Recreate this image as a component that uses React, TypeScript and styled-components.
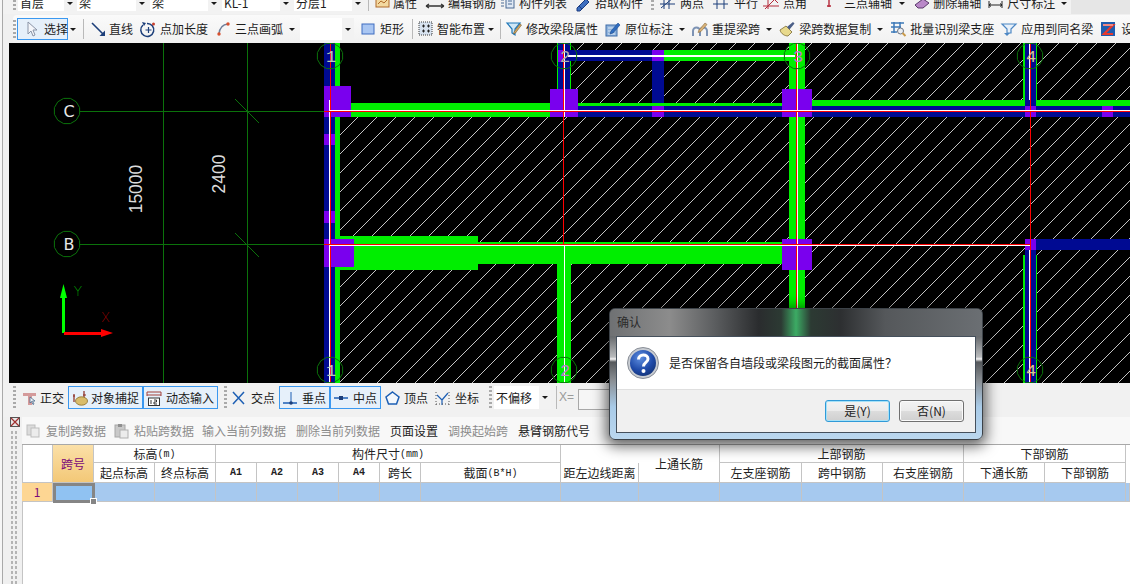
import React from "react";
import styled, { createGlobalStyle } from "styled-components";

const Global = createGlobalStyle`
  html, body { margin: 0; padding: 0; overflow: hidden; background: #f0f0f0; }
  * { box-sizing: border-box; }
`;

const FONT = `"Noto Sans CJK SC", "Liberation Sans", sans-serif`;

const Page = styled.div`
  position: relative;
  width: 1130px;
  height: 584px;
  overflow: hidden;
  padding-left: 3px;
  background: linear-gradient(90deg, #f6f6f6 2px, #a9a9a9 2px, #a9a9a9 3px, #f0f0f0 3px);
  font: 12px/16px ${FONT};
  color: #1c1c1c;
  display: flex;
  flex-direction: column;
`;

const TopRow = styled.div`
  height: 14px;
  flex: none;
  display: flex;
  align-items: flex-end;
  padding: 0 0 3px 13px;
  overflow: hidden;
  background: linear-gradient(90deg, #f2f2f2, #f2f2f2 1068px, #e6e6e6 1068px);
`;

const MainRow = styled.div`
  height: 29px;
  flex: none;
  display: flex;
  align-items: center;
  padding-left: 10px;
  padding-top: 1px;
  background: #f0f0f0;
  overflow: hidden;
  white-space: nowrap;
`;

const Band = styled.div`
  display: flex;
  align-items: center;
  height: 100%;
  flex: 1;
  border-radius: 4px 0 0 0;
  background: linear-gradient(#fafafa, #f1f1f1);
`;

const Grip = styled.span<{ $ml?: number; $h?: number }>`
  flex: none;
  width: 3px;
  height: ${(p) => p.$h ?? 18}px;
  margin-left: ${(p) => p.$ml ?? 0}px;
  background-image: linear-gradient(#a9a9a9 50%, transparent 50%);
  background-size: 3px 4px;
`;

const Sep = styled.span<{ $ml: number }>`
  flex: none;
  width: 1px;
  height: 20px;
  margin-left: ${(p) => p.$ml}px;
  background: #b9b9b9;
`;

const Item = styled.span<{ $ml: number; $gap: number; $dim?: boolean }>`
  flex: none;
  display: inline-flex;
  align-items: center;
  gap: ${(p) => p.$gap}px;
  margin-left: ${(p) => p.$ml}px;
  color: ${(p) => (p.$dim ? "#8c8c8c" : "#1c1c1c")};
`;

const ActiveBtn = styled.span<{ $ml: number; $w: number; $pad: number; $gap: number; $h?: number }>`
  flex: none;
  display: inline-flex;
  align-items: center;
  gap: ${(p) => p.$gap}px;
  width: ${(p) => p.$w}px;
  height: ${(p) => p.$h ?? 23}px;
  margin-left: ${(p) => p.$ml}px;
  padding-left: ${(p) => p.$pad - 1}px;
  border: 1px solid #3a98f0;
  background: #e6f0fa;
`;

const Caret = styled.span<{ $ml: number }>`
  flex: none;
  width: 10px;
  height: 16px;
  margin-left: ${(p) => p.$ml}px;
  display: inline-flex;
  align-items: center;
  justify-content: center;
  &::after {
    content: "";
    border-left: 3px solid transparent;
    border-right: 3px solid transparent;
    border-top: 3px solid #1a1a1a;
  }
`;

const Combo = styled.span<{ $ml: number; $w: number; $h?: number }>`
  flex: none;
  position: relative;
  width: ${(p) => p.$w}px;
  height: ${(p) => p.$h ?? 22}px;
  margin-left: ${(p) => p.$ml}px;
  padding-left: 2px;
  background: #fff;
  line-height: ${(p) => p.$h ?? 22}px;
`;

const ComboArrow = styled.span`
  position: absolute;
  right: 0;
  top: 0;
  bottom: 0;
  width: 12px;
  background: #f2f2f2;
  display: flex;
  align-items: center;
  justify-content: center;
  &::after {
    content: "";
    border-left: 3px solid transparent;
    border-right: 3px solid transparent;
    border-top: 3px solid #1a1a1a;
  }
`;

const CanvasRow = styled.div`
  height: 340px;
  flex: none;
  display: flex;
`;

const Rail = styled.div`
  width: 6px;
  flex: none;
  background: #f0f0f0;
`;

const Canvas = styled.svg`
  display: block;
  flex: none;
  background: #000;
`;

const SnapRow = styled.div`
  height: 34px;
  flex: none;
  display: flex;
  align-items: flex-start;
  padding: 3px 0 0 10px;
  background: #f1f1f1;
  white-space: nowrap;
  > * { height: 23px; }
`;

const XLabel = styled.span`
  flex: none;
  width: 19px;
  margin-left: 2px;
  line-height: 23px;
  color: #9a9a9a;
  font-family: "Liberation Sans", sans-serif;
`;

const XInput = styled.span`
  flex: none;
  width: 60px;
  margin-top: 3px;
  height: 21px !important;
  border: 1px solid #a8a8a8;
  background: #f6f6f6;
`;

const Lower = styled.div`
  flex: 1;
  display: flex;
  min-height: 0;
`;

const LowerRail = styled.div`
  width: 19px;
  flex: none;
  background: #f0f0f0;
  padding: 0 0 0 7px;
  display: flex;
  flex-direction: column;
`;

const RailDots = styled.div`
  margin-top: 3px;
  flex: 1;
  width: 8px;
  background-image: radial-gradient(#b4b4b4 1px, transparent 1.2px);
  background-size: 4px 5px;
`;

const LowerMain = styled.div`
  flex: 1;
  min-width: 0;
  display: flex;
  flex-direction: column;
  background: #fff;
`;

const CmdRow = styled.div`
  height: 27px;
  flex: none;
  display: flex;
  align-items: center;
  background: #f8f8f8;
  white-space: nowrap;
`;

const TableArea = styled.div`
  flex: 1;
  box-shadow: inset 1px 0 #c4c4c4;
`;

const Table = styled.div`
  display: grid;
  grid-template-columns: 31px 41px 61px 61px 41px 41px 41px 41px 41px 140px 78px 81px 82px 81px 81px 81px 81px 4px;
  grid-template-rows: 18px 20px 19px;
  border-top: 1px solid #a8a8a8;
  position: relative;
`;

const Cell = styled.div<{ $col: string; $row: string; $tone?: "head" | "corner" | "rowhead" | "data" }>`
  grid-column: ${(p) => p.$col};
  grid-row: ${(p) => p.$row};
  display: flex;
  align-items: center;
  justify-content: center;
  overflow: hidden;
  white-space: nowrap;
  border-right: 1px solid #c4c4c4;
  border-bottom: 1px solid #c4c4c4;
  line-height: 16px;
  color: ${(p) => (p.$tone === "corner" || p.$tone === "rowhead" ? "#7a0a7a" : "#222")};
  background: ${(p) =>
    p.$tone === "corner"
      ? "linear-gradient(#fbe0a8, #f3c877)"
      : p.$tone === "rowhead"
      ? "#fdd693"
      : p.$tone === "data"
      ? "#a6c9ef"
      : "transparent"};
`;

const Small = styled.span`
  font: 10px/16px "Liberation Mono", monospace;
  padding-top: 2px;
`;

const Mono = styled.span`
  font: bold 10px/16px "Liberation Mono", monospace;
`;

const CurrentCell = styled.div`
  position: absolute;
  left: 31px;
  top: 38px;
  width: 42px;
  height: 20px;
  border: 3px solid #858585;
  background: #90c2f2;
  &::after {
    content: "";
    position: absolute;
    right: -5px;
    bottom: -5px;
    width: 5px;
    height: 5px;
    background: #858585;
    border: 1px solid #fff;
  }
`;

const Dialog = styled.div`
  position: absolute;
  left: 609px;
  top: 308px;
  width: 374px;
  height: 132px;
  padding: 0 6px 6px;
  border-radius: 6px;
  border: 1px solid #3c4248;
  box-shadow: 0 3px 14px 3px rgba(0, 0, 0, 0.62);
  background: linear-gradient(
    #5d6063 0,
    #6a6d70 28px,
    #b9bbbd 48px,
    #f4f4f4 50px,
    #55585b 53px,
    #8b9095 72px,
    #a9cbe8 98px,
    #bcd8ef 132px
  );
  display: flex;
  flex-direction: column;
`;

const DialogTitle = styled.div`
  height: 27px;
  flex: none;
  margin: 0 -6px;
  padding-left: 7px;
  line-height: 26px;
  color: #2b2b2b;
  border-radius: 5px 5px 0 0;
  background: linear-gradient(
    90deg,
    #6f7173 0,
    #8c8c8c 16%,
    #5c5e60 28%,
    #2a2c2e 40%,
    #2c3a33 46%,
    #3cab64 50%,
    #2c3a33 54%,
    #2d2f31 62%,
    #55585b 74%,
    #6b6f73 100%
  );
`;

const DialogBody = styled.div`
  flex: 1;
  display: flex;
  flex-direction: column;
  border: 1px solid #45505c;
  background: #f0f0f0;
`;

const Message = styled.div`
  height: 53px;
  flex: none;
  display: flex;
  align-items: center;
  gap: 10px;
  padding: 0 0 1px 10px;
  background: #fff;
  border-bottom: 1px solid #dfdfdf;
  white-space: nowrap;
`;

const DialogButtons = styled.div`
  flex: 1;
  display: flex;
  justify-content: flex-end;
  gap: 9px;
  padding: 10px 11px 0 0;
`;

const DlgButton = styled.div<{ $focus?: boolean }>`
  width: 65px;
  height: 22px;
  display: flex;
  align-items: center;
  justify-content: center;
  border-radius: 3px;
  border: 1px solid ${(p) => (p.$focus ? "#2f9ad8" : "#707070")};
  box-shadow: inset 0 0 0 1px ${(p) => (p.$focus ? "#a6e1f7" : "#fbfbfb")};
  background: linear-gradient(#f3f3f3, #ebebeb 48%, #dcdcdc 52%, #cfcfcf);
`;

/* ---------- icons ---------- */

const Svg = styled.svg`
  flex: none;
  display: block;
  overflow: visible;
`;

const icons: Record<string, React.ReactNode> = {
  cursor: <path d="M3 1v12l3-3 2 5 2-1-2-5h4z" fill="#f4f6fa" stroke="#8a94a6" />,
  line: (
    <>
      <path d="M1 2l12 12" stroke="#1d3f7a" strokeWidth="1.6" fill="none" />
      <path d="M14 15H8.5L14 9.5z" fill="#1d3f7a" />
    </>
  ),
  addlen: (
    <>
      <path d="M3 4a6.5 6.5 0 1 0 4-1.6" stroke="#1d3f7a" strokeWidth="1.5" fill="none" />
      <path d="M8.5 6v6M5.5 9h6" stroke="#1d3f7a" strokeWidth="1.2" />
      <path d="M2 1l4 1-2 3z" fill="#1d3f7a" />
      <circle cx="13.5" cy="3" r="1.5" fill="#c8402e" />
    </>
  ),
  arc: (
    <>
      <path d="M3 13C3.5 7 7 3.5 12 3" stroke="#6f7f9a" strokeWidth="1.4" fill="none" />
      <circle cx="3" cy="13" r="1.7" fill="#d8502e" />
      <circle cx="12" cy="3" r="1.7" fill="#d8502e" />
    </>
  ),
  rect: <rect x="1" y="3" width="12" height="10" fill="#a9c6f2" stroke="#3f6cc0" />,
  smart: (
    <>
      <rect x="1" y="1" width="13" height="13" fill="#d7e2ef" stroke="#3a3a3a" strokeDasharray="1 1" />
      <path d="M4 5h3M5.5 3.5v3M9 5h3M10.5 3.5v3M4 10h3M5.5 8.5v3M9 10h3M10.5 8.5v3" stroke="#222" />
    </>
  ),
  funnel: (
    <>
      <path d="M1 2h13l-5 6v6l-3-2V8z" fill="#cfe7f6" stroke="#2178b8" strokeWidth="1.2" />
      <path d="M8 11l6-8 1.5 1-6 8-2 1z" fill="#d9a75a" stroke="#6a5a3a" strokeWidth=".6" />
    </>
  ),
  doc: (
    <>
      <rect x="1" y="4" width="11" height="11" fill="#8fb3dc" stroke="#3f6ca8" />
      <path d="M3 7h7M3 10h7M3 13h7" stroke="#dce8f6" />
      <path d="M6 10l7-8 2 2-7 8-3 1z" fill="#2f6dc0" stroke="#1b4a8c" strokeWidth=".6" />
    </>
  ),
  arches: (
    <>
      <path d="M1 15v-5a3 3 0 0 1 7 0v5M8 15v-5a3 3 0 0 1 7 0v5" stroke="#7d93b4" strokeWidth="2" fill="none" />
      <path d="M7 9l6-7 2 1.5-6 7-3 1z" fill="#d9b37a" stroke="#8a6a3a" strokeWidth=".6" />
    </>
  ),
  brush: (
    <>
      <path d="M1 9l6-4 6 6-4 4C6 15 2 13 1 9z" fill="#e8d98c" stroke="#7a6a32" strokeWidth=".8" />
      <path d="M8 6l6-5 1.5 1.5-5 6z" fill="#4b5f88" />
    </>
  ),
  batch: (
    <>
      <path d="M1 2h13M1 6h10M4 1v11M10 1v6M1 11h6" stroke="#3d79b8" strokeWidth="1.5" />
      <circle cx="10.5" cy="10" r="3" fill="#e9eef3" stroke="#6b7280" />
      <path d="M12.5 12l3 3" stroke="#c99a4a" strokeWidth="2" />
    </>
  ),
  apply: (
    <>
      <path d="M1 3h14l-5 5v4H6V8z" fill="#e8f1fa" stroke="#4d87c4" strokeWidth="1.2" />
      <path d="M3 12l3 3 3-3z" fill="#4d87c4" />
    </>
  ),
  zbox: (
    <>
      <rect x="1" y="1" width="14" height="14" fill="#1e5cae" />
      <path d="M3 4h10L4 13h9" stroke="#e6392e" strokeWidth="2.2" fill="none" />
      <path d="M3 4h10" stroke="#fff" strokeWidth=".8" />
    </>
  ),
  prop: (
    <>
      <rect x="1" y="2" width="13" height="10" fill="#f3d9a0" stroke="#b06a2a" />
      <path d="M3 9l3-3 3 2 3-3" stroke="#b06a2a" fill="none" />
    </>
  ),
  steel: <path d="M1 11h18M1 11l3-2M1 11l3 2M19 11l-3-2M19 11l-3 2M8 11h4" stroke="#333" strokeWidth="1.3" fill="none" />,
  list: (
    <>
      <rect x="6" y="2" width="8" height="11" fill="#dfe8f4" stroke="#4a6a94" />
      <path d="M1 5h3M1 8h3M1 11h3M8 6h4M8 9h4" stroke="#4a6a94" />
    </>
  ),
  pick: <path d="M1 13l9-9 3 3-9 9H1zM3 11l3 3" fill="#3d6fc0" stroke="#1c3c80" />,
  axis2: <path d="M0 9h15M4 3v11M9 3v11M1 13L13 3" stroke="#1d3f7a" fill="none" />,
  axis3: <path d="M0 9h15M4 3v11M11 3v11" stroke="#1d3f7a" fill="none" />,
  axis4: <path d="M0 11h16M5 3v11M14 2L2 14M11 4l4 4" stroke="#b52a3a" fill="none" />,
  axis5: <path d="M3 4v8M1 11h4" stroke="#b52a3a" strokeWidth="1.4" fill="none" />,
  eraser: <path d="M2 10l8-6 6 4-6 5H5z" fill="#b988c8" stroke="#5a3a6a" />,
  dim: <path d="M1 6v7M14 6v7M1 10h13M3 8.5L1 10l2 1.5M12 8.5l2 1.5-2 1.5" stroke="#222" fill="none" />,
  ortho: (
    <>
      <path d="M1 3h13v3H10v9H6V6H1z" fill="#d49a9a" />
      <path d="M8 7v6l1.5-1.5 1.5 3 1-.5-1.5-3H13z" fill="#eef2f6" stroke="#4e6d8e" strokeWidth=".8" />
    </>
  ),
  snap: (
    <>
      <path d="M2 4v8M12 1v7" stroke="#8a2a20" strokeWidth="1.2" />
      <path d="M1 6h2M11 5h3" stroke="#8a2a20" />
      <ellipse cx="9.5" cy="11" rx="6" ry="4.2" fill="#d9bd6c" stroke="#8a6d2a" strokeWidth=".8" />
    </>
  ),
  dyn: (
    <>
      <path d="M1 2h14M1 5h14M1 2v4M15 2v4" stroke="#a2403a" fill="none" />
      <rect x="2.5" y="8" width="11" height="7.5" fill="#fff" stroke="#333" />
      <path d="M5 10v4M8 10h2.5v2H8v2h3" stroke="#222" strokeWidth=".9" fill="none" />
    </>
  ),
  cross: <path d="M2 2l11 12M13 2L2 14" stroke="#1d5fb4" strokeWidth="1.5" />,
  perp: (
    <>
      <path d="M0 13h14" stroke="#1d5fb4" strokeWidth="1.5" />
      <path d="M8 2v11" stroke="#1d5fb4" />
      <circle cx="8" cy="13" r="1.8" fill="#1d3f7a" />
    </>
  ),
  mid: (
    <>
      <path d="M0 8h14" stroke="#1d5fb4" strokeWidth="1.5" />
      <rect x="5" y="6" width="4" height="4" fill="#1d3f7a" />
    </>
  ),
  vertex: <path d="M7.5 2L14 7l-2.5 7h-8L1 7z" fill="#f4f8fc" stroke="#1d5fb4" strokeWidth="1.5" />,
  coord: (
    <>
      <path d="M2 5l5 5M7 10l6-7M7 10v5" stroke="#1d5fb4" strokeWidth="1.2" />
      <path d="M1 2v13M14 2v13" stroke="#555" strokeDasharray="1 2" />
      <path d="M1 14h13" stroke="#555" strokeDasharray="1 2" />
    </>
  ),
  copyD: (
    <>
      <rect x="1" y="2" width="8" height="10" fill="#dcdcdc" stroke="#bdbdbd" />
      <rect x="5" y="5" width="8" height="9" fill="#ececec" stroke="#bdbdbd" />
    </>
  ),
  pasteD: (
    <>
      <rect x="1" y="2" width="10" height="12" fill="#c9c9c9" stroke="#a6a6a6" />
      <rect x="4" y="1" width="4" height="3" fill="#8f8f8f" />
      <rect x="6" y="7" width="8" height="8" fill="#ececec" stroke="#b0b0b0" />
    </>
  ),
};

const Icon = ({ n, w = 16 }: { n: string; w?: number }) => (
  <Svg width={w} height={16} viewBox={`0 0 ${w} 16`}>
    {icons[n]}
  </Svg>
);

type ToolDef = { i: string; w: number; t: string; ml: number; gap: number; caret?: number };

const topCombos = [
  { t: "首层", ml: 2, w: 58 },
  { t: "梁", ml: 1, w: 71 },
  { t: "梁", ml: 2, w: 70 },
  { t: "KL-1", ml: 2, w: 70 },
  { t: "分层1", ml: 2, w: 70 },
];

const topTools: ToolDef[] = [
  { i: "prop", w: 15, t: "属性", ml: 6, gap: 3 },
  { i: "steel", w: 20, t: "编辑钢筋", ml: 8, gap: 3 },
  { i: "list", w: 15, t: "构件列表", ml: 4, gap: 4 },
  { i: "pick", w: 14, t: "拾取构件", ml: 9, gap: 5 },
];

const topTools2: ToolDef[] = [
  { i: "axis2", w: 15, t: "两点", ml: 6, gap: 5 },
  { i: "axis3", w: 15, t: "平行", ml: 9, gap: 6 },
  { i: "axis4", w: 18, t: "点角", ml: 5, gap: 2 },
  { i: "axis5", w: 8, t: "三点辅轴", ml: 19, gap: 10, caret: 5 },
  { i: "eraser", w: 18, t: "删除辅轴", ml: 6, gap: 2 },
  { i: "dim", w: 15, t: "尺寸标注", ml: 7, gap: 4, caret: 4 },
];

const RunItem = ({ d }: { d: ToolDef }) => (
  <>
    <Item $ml={d.ml} $gap={d.gap}>
      <Icon n={d.i} w={d.w} />
      {d.t}
    </Item>
    {d.caret !== undefined && <Caret $ml={d.caret} />}
  </>
);

const mainA: ToolDef[] = [
  { i: "line", w: 15, t: "直线", ml: 7, gap: 3 },
  { i: "addlen", w: 17, t: "点加长度", ml: 7, gap: 3 },
  { i: "arc", w: 15, t: "三点画弧", ml: 8, gap: 4, caret: 4 },
];

const mainB: ToolDef[] = [
  { i: "funnel", w: 16, t: "修改梁段属性", ml: 5, gap: 4 },
  { i: "doc", w: 16, t: "原位标注", ml: 7, gap: 4, caret: 4 },
  { i: "arches", w: 17, t: "重提梁跨", ml: 5, gap: 3, caret: 4 },
  { i: "brush", w: 16, t: "梁跨数据复制", ml: 5, gap: 4, caret: 4 },
  { i: "batch", w: 16, t: "批量识别梁支座", ml: 5, gap: 4 },
  { i: "apply", w: 17, t: "应用到同名梁", ml: 7, gap: 3 },
  { i: "zbox", w: 16, t: "设置", ml: 7, gap: 5 },
];

/* ---------- CAD drawing data ---------- */

const G = "#00ee00";
const B = "#000a92";
const P = "#7a00ee";
const W = "#ffffff";
const R = "#ff0000";

const shapes: [number, number, number, number, string][] = [
  [324, 43, 11, 340, B],
  [335, 43, 5, 340, G],
  [324, 134, 11, 11, P],
  [324, 211, 11, 12, P],
  [351, 103, 199, 14, G],
  [557, 43, 14, 46, G],
  [558, 43, 12, 46, B],
  [558, 50, 7, 12, P],
  [570, 50, 82, 11, B],
  [652, 50, 12, 11, P],
  [664, 50, 126, 11, G],
  [652, 61, 12, 45, B],
  [578, 103, 204, 3, G],
  [578, 106, 204, 11, B],
  [652, 106, 12, 11, P],
  [789, 43, 16, 340, G],
  [812, 100, 318, 6, G],
  [812, 106, 318, 11, B],
  [1023, 43, 14, 57, G],
  [1025, 43, 11, 63, B],
  [1025, 106, 11, 11, P],
  [1102, 106, 11, 11, P],
  [340, 236, 138, 34, G],
  [478, 242, 304, 22, G],
  [557, 264, 14, 119, G],
  [1023, 255, 14, 128, G],
  [1025, 250, 11, 133, B],
  [1025, 239, 105, 11, B],
  [1025, 239, 11, 11, P],
  [324, 86, 27, 31, P],
  [550, 89, 28, 28, P],
  [782, 89, 30, 28, P],
  [324, 239, 30, 28, P],
  [782, 239, 30, 31, P],
  // axis lines
  [329, 100, 1, 283, W],
  [330, 43, 1, 340, R],
  [564, 43, 1, 74, W],
  [564, 245, 1, 138, W],
  [563, 43, 1, 202, R],
  [797, 43, 1, 340, W],
  [796, 43, 1, 340, R],
  [1029, 43, 1, 57, W],
  [1029, 250, 1, 133, W],
  [1030, 43, 1, 340, R],
  [330, 110, 800, 1, W],
  [324, 111, 806, 1, R],
  [330, 245, 700, 1, W],
  [324, 244, 706, 1, R],
  [568, 55, 227, 2, W],
];

const ring = (cx: number, cy: number, r: number) =>
  Array.from({ length: 12 }, (_, k) => {
    const a = (k * Math.PI) / 6 + Math.PI / 12;
    return `${(cx + r * Math.cos(a)).toFixed(1)},${(cy + r * Math.sin(a)).toFixed(1)}`;
  }).join(" ");

const numBubbles = [
  { x: 330, y: 56, t: "1", c: "#b9c8b4" },
  { x: 564, y: 56, t: "2", c: "#b0b0b0" },
  { x: 797, y: 56, t: "3", c: "#c07ad0" },
  { x: 1030, y: 56, t: "4", c: "#d8c88a" },
  { x: 330, y: 370, t: "1", c: "#b9c8b4" },
  { x: 564, y: 370, t: "2", c: "#c07ad0" },
  { x: 1030, y: 370, t: "4", c: "#d8c88a" },
];

const GRID = "#0b720b";

const Drawing = () => (
  <Canvas viewBox="9 43 1121 340" width={1121} height={340} shapeRendering="crispEdges">
    <defs>
      <pattern id="hatch" patternUnits="userSpaceOnUse" width="19" height="19">
        <path d="M-1 20L20 -1" stroke="#c4c4c4" strokeWidth="1" shapeRendering="crispEdges" />
      </pattern>
    </defs>
    <rect x={340} y={117} width={790} height={266} fill="url(#hatch)" />
    <rect x={571} y={43} width={559} height={74} fill="url(#hatch)" />
    <path d="M80 111.5H330M80 244.5H330M163.5 43V383M247.5 43V383" stroke={GRID} fill="none" />
    <path d="M235 99L259 123M235 233L259 257" stroke={GRID} fill="none" shapeRendering="auto" />
    {shapes.map(([x, y, w, h, c], i) => (
      <rect key={i} x={x} y={y} width={w} height={h} fill={c} />
    ))}
    <g shapeRendering="auto">
      <polygon points={ring(67, 111, 13)} fill="#000" stroke={GRID} />
      <polygon points={ring(67, 244, 13)} fill="#000" stroke={GRID} />
      <text x={69} y={117} textAnchor="middle" fill="#e8e8e8" fontFamily="'DejaVu Sans', sans-serif" fontSize="16">C</text>
      <text x={69} y={250} textAnchor="middle" fill="#e8e8e8" fontFamily="'DejaVu Sans', sans-serif" fontSize="16">B</text>
      <text
        x={136}
        y={189}
        transform="rotate(-90 136 189)"
        textAnchor="middle"
        dominantBaseline="central"
        fill="#dcdcdc"
        fontFamily="'Liberation Sans', sans-serif"
        fontSize="17.5"
      >
        15000
      </text>
      <text
        x={219}
        y={174}
        transform="rotate(-90 219 174)"
        textAnchor="middle"
        dominantBaseline="central"
        fill="#dcdcdc"
        fontFamily="'Liberation Sans', sans-serif"
        fontSize="17.5"
      >
        2400
      </text>
      {numBubbles.map((b, i) => (
        <g key={i}>
          <polygon points={ring(b.x, b.y, 13)} fill="none" stroke={GRID} />
          <text
            x={b.x + 1}
            y={b.y + 6}
            textAnchor="middle"
            fill={b.c}
            fontFamily="'Liberation Mono', monospace"
            fontSize="17"
          >
            {b.t}
          </text>
        </g>
      ))}
      <path d="M62 333V298H60L63.5 284 67 298H65V333z" fill="#00ff00" />
      <path d="M64 332H101V329L113 333 101 337V335H64z" fill="#ff0000" />
      <text x={78} y={296} textAnchor="middle" fill="#00ff00" fontFamily="Inter, sans-serif" fontSize="13" fontWeight="100">Y</text>
      <text x={105.5} y={322} textAnchor="middle" fill="#ff0000" fontFamily="Inter, sans-serif" fontSize="13" fontWeight="100">X</text>
    </g>
  </Canvas>
);

/* ---------- table ---------- */

const headCells: { c: string; r: string; t: React.ReactNode; k?: "corner" }[] = [
  { c: "2", r: "1 / 3", t: "跨号", k: "corner" },
  { c: "3 / 5", r: "1", t: <>标高<Small>(m)</Small></> },
  { c: "5 / 11", r: "1", t: <>构件尺寸<Small>(mm)</Small></> },
  { c: "12", r: "1 / 3", t: "上通长筋" },
  { c: "13 / 16", r: "1", t: "上部钢筋" },
  { c: "16 / 18", r: "1", t: "下部钢筋" },
  { c: "3", r: "2", t: "起点标高" },
  { c: "4", r: "2", t: "终点标高" },
  { c: "5", r: "2", t: <Mono>A1</Mono> },
  { c: "6", r: "2", t: <Mono>A2</Mono> },
  { c: "7", r: "2", t: <Mono>A3</Mono> },
  { c: "8", r: "2", t: <Mono>A4</Mono> },
  { c: "9", r: "2", t: "跨长" },
  { c: "10", r: "2", t: <>截面<Small>(B*H)</Small></> },
  { c: "11", r: "2", t: "距左边线距离" },
  { c: "13", r: "2", t: "左支座钢筋" },
  { c: "14", r: "2", t: "跨中钢筋" },
  { c: "15", r: "2", t: "右支座钢筋" },
  { c: "16", r: "2", t: "下通长筋" },
  { c: "17", r: "2", t: "下部钢筋" },
];

const dataCols = [3, 4, 5, 6, 7, 8, 9, 10, 11, 12, 13, 14, 15, 16, 17, 18];

const cmds = [
  { t: "输入当前列数据", ml: 8, dim: true },
  { t: "删除当前列数据", ml: 10, dim: true },
  { t: "页面设置", ml: 10, dim: false },
  { t: "调换起始跨", ml: 10, dim: true },
  { t: "悬臂钢筋代号", ml: 10, dim: false },
];

const CloseBox = () => (
  <Svg width={10} height={10} viewBox="0 0 10 10">
    <rect x=".5" y=".5" width="9" height="9" fill="#e8e8e8" stroke="#555" />
    <path d="M1 1l8 8M9 1L1 9" stroke="#a03030" strokeWidth="1.2" />
  </Svg>
);

const QuestionIcon = () => (
  <Svg width={32} height={32} viewBox="0 0 32 32">
    <defs>
      <radialGradient id="qb" cx="40%" cy="30%" r="80%">
        <stop offset="0" stopColor="#5f8fe0" />
        <stop offset=".6" stopColor="#1f4aa8" />
        <stop offset="1" stopColor="#12306f" />
      </radialGradient>
    </defs>
    <circle cx="16" cy="16" r="15.5" fill="#c8ccd2" stroke="#8a8f98" />
    <circle cx="16" cy="16" r="13" fill="url(#qb)" />
    <path d="M11.5 12.5c0-6 9.5-6 9.5-.5 0 3.5-4.5 3.5-4.5 7.5" stroke="#fff" strokeWidth="3" fill="none" />
    <circle cx="16.5" cy="24" r="2" fill="#fff" />
  </Svg>
);

export default function App() {
  return (
    <Page>
      <Global />
      <TopRow>
        <Grip $h={11} $ml={-3} />
        {topCombos.map((c, i) => (
          <Combo key={i} $ml={c.ml} $w={c.w} $h={16}>
            {c.t}
            <ComboArrow />
          </Combo>
        ))}
        <Sep $ml={4} />
        {topTools.map((d) => (
          <RunItem key={d.t} d={d} />
        ))}
        <Grip $h={11} $ml={8} />
        {topTools2.map((d) => (
          <RunItem key={d.t} d={d} />
        ))}
      </TopRow>
      <MainRow>
        <Band>
          <Grip />
          <ActiveBtn $ml={1} $w={51} $pad={8} $gap={6} $h={22}>
            <Icon n="cursor" w={13} />
            选择
          </ActiveBtn>
          <Caret $ml={0} />
          <Sep $ml={5} />
          {mainA.map((d) => (
            <RunItem key={d.t} d={d} />
          ))}
          <Combo $ml={3} $w={54}>
            <ComboArrow />
          </Combo>
          <Item $ml={7} $gap={5}>
            <Icon n="rect" w={14} />
            矩形
          </Item>
          <Sep $ml={8} />
          <Item $ml={5} $gap={5}>
            <Icon n="smart" w={14} />
            智能布置
          </Item>
          <Caret $ml={1} />
          <Sep $ml={4} />
          {mainB.map((d) => (
            <RunItem key={d.t} d={d} />
          ))}
        </Band>
      </MainRow>
      <CanvasRow>
        <Rail />
        <Drawing />
      </CanvasRow>
      <SnapRow>
        <Grip />
        <Item $ml={6} $gap={4}>
          <Icon n="ortho" w={14} />
          正交
        </Item>
        <ActiveBtn $ml={4} $w={75} $pad={4} $gap={3}>
          <Icon n="snap" />
          对象捕捉
        </ActiveBtn>
        <ActiveBtn $ml={0} $w={75} $pad={3} $gap={4}>
          <Icon n="dyn" />
          动态输入
        </ActiveBtn>
        <Grip $ml={6} />
        <Item $ml={4} $gap={5}>
          <Icon n="cross" w={15} />
          交点
        </Item>
        <ActiveBtn $ml={4} $w={51} $pad={4} $gap={5}>
          <Icon n="perp" w={14} />
          垂点
        </ActiveBtn>
        <ActiveBtn $ml={0} $w={51} $pad={4} $gap={5}>
          <Icon n="mid" w={14} />
          中点
        </ActiveBtn>
        <Item $ml={4} $gap={4}>
          <Icon n="vertex" w={15} />
          顶点
        </Item>
        <Item $ml={7} $gap={4}>
          <Icon n="coord" />
          坐标
        </Item>
        <Grip $ml={10} />
        <Combo $ml={2} $w={57} $h={23}>
          不偏移
          <ComboArrow />
        </Combo>
        <Sep $ml={5} />
        <XLabel>X=</XLabel>
        <XInput />
      </SnapRow>
      <Lower>
        <LowerRail>
          <CloseBox />
          <RailDots />
        </LowerRail>
        <LowerMain>
          <CmdRow>
            <Item $ml={4} $gap={6} $dim>
              <Icon n="copyD" w={14} />
              复制跨数据
            </Item>
            <Item $ml={8} $gap={6} $dim>
              <Icon n="pasteD" w={14} />
              粘贴跨数据
            </Item>
            {cmds.map((c) => (
              <Item key={c.t} $ml={c.ml} $gap={0} $dim={c.dim}>
                {c.t}
              </Item>
            ))}
          </CmdRow>
          <TableArea>
            <Table>
              <Cell $col="1" $row="1 / 3" />
              {headCells.map((h, i) => (
                <Cell key={i} $col={h.c} $row={h.r} $tone={h.k ?? "head"}>
                  {h.t}
                </Cell>
              ))}
              <Cell $col="1" $row="3" $tone="rowhead">
                1
              </Cell>
              <Cell $col="2" $row="3" $tone="data" />
              {dataCols.map((c) => (
                <Cell key={c} $col={String(c)} $row="3" $tone="data" />
              ))}
              <CurrentCell />
            </Table>
          </TableArea>
        </LowerMain>
      </Lower>
      <Dialog>
        <DialogTitle>确认</DialogTitle>
        <DialogBody>
          <Message>
            <QuestionIcon />
            是否保留各自墙段或梁段图元的截面属性？
          </Message>
          <DialogButtons>
            <DlgButton $focus>是(Y)</DlgButton>
            <DlgButton>否(N)</DlgButton>
          </DialogButtons>
        </DialogBody>
      </Dialog>
    </Page>
  );
}
